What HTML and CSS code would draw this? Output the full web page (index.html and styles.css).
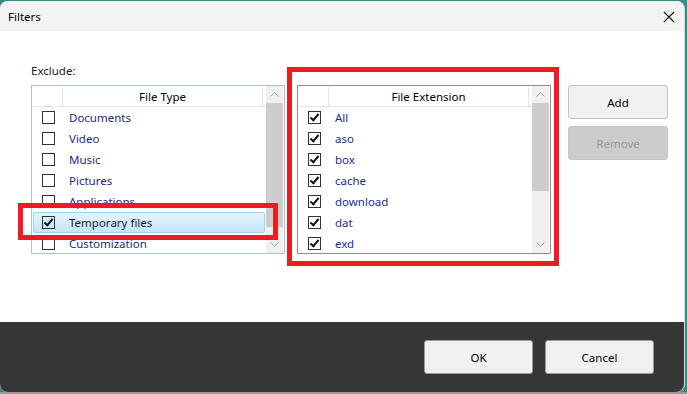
FILE: index.html
```html
<!DOCTYPE html>
<html lang="en">
<head>
  <meta charset="UTF-8">
  <title>Filters</title>
  <link rel="stylesheet" href="styles.css">
</head>
<body>

  <div class="window">
    <div class="titlebar">
      <span class="title">Filters</span>
      <svg class="close" width="12" height="12" viewBox="0 0 12 12">
        <path d="M1 1 L11 11 M11 1 L1 11" stroke="#111" stroke-width="1.1" fill="none"/>
      </svg>
    </div>

    <div class="content">
      <div class="label">Exclude:</div>
      <div class="panes">
        <div class="list list-type">
          <div class="list-body">
            <div class="list-head">
              <div class="head-check"></div>
              <div class="head-name">File Type</div>
            </div>
            <div class="row"><span class="check"></span><span class="name">Documents</span></div>
            <div class="row"><span class="check"></span><span class="name">Video</span></div>
            <div class="row"><span class="check"></span><span class="name">Music</span></div>
            <div class="row"><span class="check"></span><span class="name">Pictures</span></div>
            <div class="row"><span class="check"></span><span class="name">Applications</span></div>
            <div class="row selected"><span class="check on"></span><span class="name">Temporary files</span></div>
            <div class="row"><span class="check"></span><span class="name">Customization</span></div>
          </div>
          <div class="scrollbar">
            <div class="arrow"><svg width="9" height="5" viewBox="0 0 9 5"><path d="M0.5 4.5 L4.5 0.8 L8.5 4.5" stroke="#a8a8a8" stroke-width="1" fill="none"/></svg></div>
            <div class="track"><div class="thumb thumb-type"></div></div>
            <div class="arrow"><svg width="9" height="5" viewBox="0 0 9 5"><path d="M0.5 0.5 L4.5 4.2 L8.5 0.5" stroke="#a8a8a8" stroke-width="1" fill="none"/></svg></div>
          </div>
        </div>

        <div class="list list-ext">
          <div class="list-body">
            <div class="list-head">
              <div class="head-check"></div>
              <div class="head-name">File Extension</div>
            </div>
            <div class="row"><span class="check on"></span><span class="name">All</span></div>
            <div class="row"><span class="check on"></span><span class="name">aso</span></div>
            <div class="row"><span class="check on"></span><span class="name">box</span></div>
            <div class="row"><span class="check on"></span><span class="name">cache</span></div>
            <div class="row"><span class="check on"></span><span class="name">download</span></div>
            <div class="row"><span class="check on"></span><span class="name">dat</span></div>
            <div class="row"><span class="check on"></span><span class="name">exd</span></div>
          </div>
          <div class="scrollbar">
            <div class="arrow"><svg width="9" height="5" viewBox="0 0 9 5"><path d="M0.5 4.5 L4.5 0.8 L8.5 4.5" stroke="#a8a8a8" stroke-width="1" fill="none"/></svg></div>
            <div class="track"><div class="thumb thumb-ext"></div></div>
            <div class="arrow"><svg width="9" height="5" viewBox="0 0 9 5"><path d="M0.5 0.5 L4.5 4.2 L8.5 0.5" stroke="#a8a8a8" stroke-width="1" fill="none"/></svg></div>
          </div>
        </div>

        <div class="side-buttons">
          <button class="btn">Add</button>
          <button class="btn" disabled>Remove</button>
        </div>
      </div>

      <div class="mark mark-row"></div>
      <div class="mark mark-list"></div>
    </div>

    <div class="footer">
      <button class="btn btn-wide">OK</button>
      <button class="btn btn-wide">Cancel</button>
    </div>
  </div>

</body>
</html>
```

FILE: styles.css
```css
html, body {
  margin: 0;
  padding: 0;
}
body {
  width: 687px;
  height: 394px;
  overflow: hidden;
  background: linear-gradient(#3a8c83 0, #3a8c83 392px, #9a9a9a 392px);
  font-family: "Noto Sans", "Liberation Sans", sans-serif;
  font-size: 11.5px;
  color: #000;
}
.window {
  width: 684px;
  height: 391px;
  margin-top: 1px;
  border-radius: 8px;
  overflow: hidden;
  background: #fff;
  box-shadow: 1px 0 0 #d8d8d8;
  display: flex;
  flex-direction: column;
}
.titlebar {
  height: 30px;
  flex: none;
  background: #f3f3f3;
  display: flex;
  align-items: center;
  justify-content: space-between;
  padding: 0 8px 0 8px;
}
.close {
  margin-right: 1px;
  margin-top: 1px;
}
.content {
  position: relative;
  height: 291px;
  flex: none;
  padding: 0 0 0 31px;
  box-sizing: border-box;
}
.label {
  color: #222;
  padding-top: 32px;
  line-height: 16px;
  height: 16px;
  margin-bottom: 6px;
}
.panes {
  display: flex;
  align-items: flex-start;
}
.list {
  width: 254px;
  height: 169px;
  box-sizing: border-box;
  border: 1px solid #a9c3d9;
  display: flex;
  overflow: hidden;
  background: #fff;
}
.list-ext {
  margin-left: 12px;
  border-color: #8d8d8d;
}
.list-body {
  flex: 1;
  padding: 1px 0 0 1px;
}
.list-head {
  display: flex;
  height: 19px;
  border-bottom: 1px solid #e3e3e3;
  line-height: 19px;
}
.head-check {
  width: 29px;
  border-right: 1px solid #e3e3e3;
}
.head-name {
  flex: 1;
  text-align: center;
  border-right: 1px solid #e3e3e3;
  margin-right: 3px;
}
.row {
  height: 21px;
  display: flex;
  align-items: center;
  box-sizing: border-box;
  border: 1px solid transparent;
}
.row .check {
  width: 11px;
  height: 11px;
  border: 1px solid #333;
  margin-left: 8px;
  position: relative;
}
.row .check.on::after {
  content: "";
  position: absolute;
  left: 3px;
  top: 0px;
  width: 3px;
  height: 7px;
  border: solid #111;
  border-width: 0 2px 2px 0;
  transform: rotate(40deg);
}
.row .name {
  margin-left: 14px;
  color: #22288a;
}
.list-ext .row .name {
  color: #1b2f96;
}
.row.selected {
  background: linear-gradient(#e4f4fd, #c3e7f9);
  border-color: #9cd3f0;
  border-radius: 2px;
  margin-right: 1px;
}
.row.selected .name {
  color: #1a1a3a;
}
.scrollbar {
  width: 17px;
  flex: none;
  margin-right: 1px;
  background: #f0f0f0;
  display: flex;
  flex-direction: column;
}
.arrow {
  height: 17px;
  display: flex;
  align-items: center;
  justify-content: center;
}
.track {
  flex: 1;
}
.thumb {
  background: #cdcdcd;
}
.thumb-type {
  height: 124px;
}
.thumb-ext {
  height: 88px;
}
.side-buttons {
  margin-left: 17px;
  display: flex;
  flex-direction: column;
  gap: 7px;
}
.btn {
  width: 100px;
  height: 34px;
  font-family: "Noto Sans", "Liberation Sans", sans-serif;
  font-size: 11.5px;
  color: #000;
  background: #f1f1f1;
  border: 1px solid #c2c2c2;
  border-radius: 3px;
  padding: 0;
}
.btn:disabled {
  background: #cccccc;
  border-color: #c4c4c4;
  color: #9a9a9a;
}
.btn-wide {
  width: 109px;
  border-color: #9a9a9a;
}
.footer {
  flex: 1;
  background: #363636;
  display: flex;
  justify-content: flex-end;
  align-items: flex-start;
  gap: 12px;
  padding: 18px 30px 0 0;
}
.mark {
  position: absolute;
  border: 5px solid #ec1c24;
}
.mark-row {
  left: 18px;
  top: 172px;
  width: 250px;
  height: 27px;
}
.mark-list {
  left: 287px;
  top: 36px;
  width: 262px;
  height: 189px;
}
```
